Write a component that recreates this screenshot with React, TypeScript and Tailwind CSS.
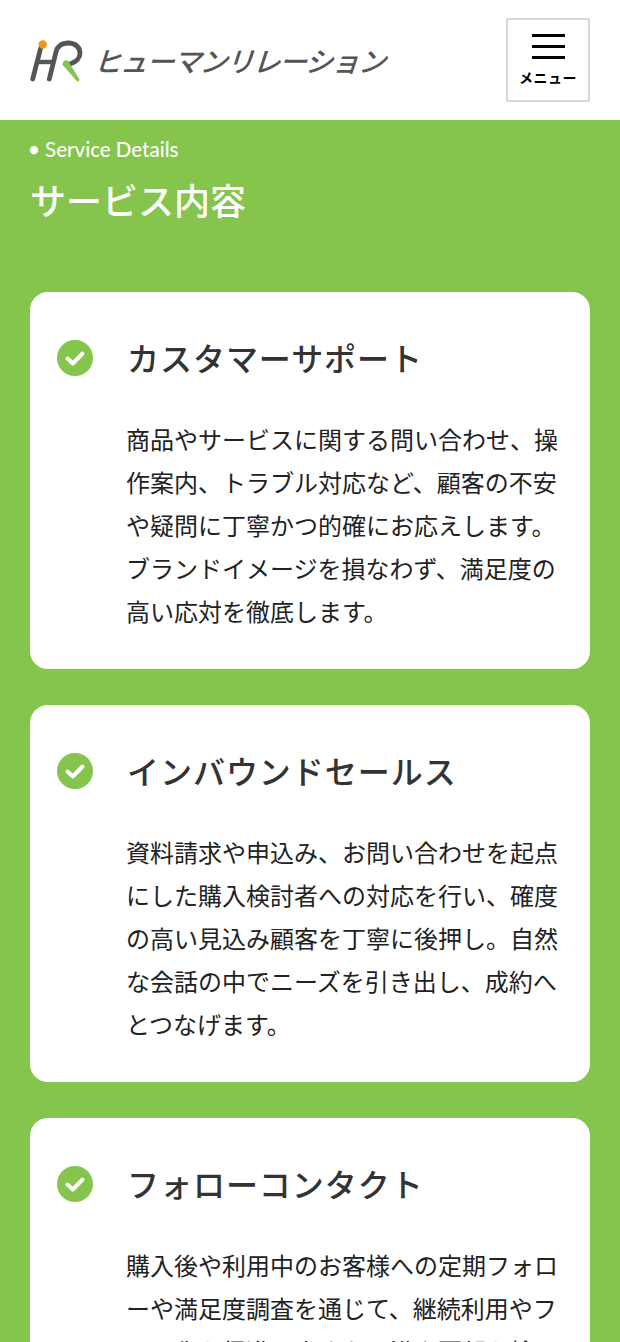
const cards = [
  {
    title: "カスタマーサポート",
    body: "商品やサービスに関する問い合わせ、操作案内、トラブル対応など、顧客の不安や疑問に丁寧かつ的確にお応えします。ブランドイメージを損なわず、満足度の高い応対を徹底します。",
  },
  {
    title: "インバウンドセールス",
    body: "資料請求や申込み、お問い合わせを起点にした購入検討者への対応を行い、確度の高い見込み顧客を丁寧に後押し。自然な会話の中でニーズを引き出し、成約へとつなげます。",
  },
  {
    title: "フォローコンタクト",
    body: "購入後や利用中のお客様への定期フォローや満足度調査を通じて、継続利用やファン化を促進。小さな不満や要望を拾い上げ、長期的な関係構築を支えます。",
  },
];

const Logo = () => (
  <div className="flex items-center gap-[13px]">
    <svg width="54" height="46" viewBox="0 0 54 46" className="block">
      <path d="M10.7 11 L2.7 42" stroke="#555" strokeWidth="4.8" strokeLinecap="round" fill="none" />
      <path d="M6 25 H22" stroke="#555" strokeWidth="4.4" fill="none" />
      <path
        d="M19.3 42 L26 15 C27.5 9 31 6 38 6 C46 6 50 11 50 16 C50 21 46 25 41 26.5"
        stroke="#555"
        strokeWidth="4.8"
        strokeLinecap="round"
        fill="none"
      />
      <path d="M32.7 28 C32 24 37 21 39.3 25.7 L49.3 42.3 C50 44 47.8 45 46.7 44 Z" fill="#85c54d" />
      <circle cx="12.7" cy="7.5" r="4.2" fill="#f39214" />
    </svg>
    <span className="block -skew-x-[18deg] text-[28px] leading-none font-medium tracking-[-1.5px] whitespace-nowrap text-[#555] font-['Noto_Sans_CJK_JP',sans-serif]">
      ヒューマンリレーション
    </span>
  </div>
);

const CheckIcon = () => (
  <svg width="36" height="36" viewBox="0 0 36 36" className="mt-[2px] block shrink-0">
    <circle cx="18" cy="18" r="18" fill="#85c54d" />
    <path d="M10.5 18.5 L15.8 23.5 L25.5 13.5" stroke="#fff" strokeWidth="4" strokeLinecap="round" strokeLinejoin="round" fill="none" />
  </svg>
);

const App = () => {
  return (
    <div className="h-[1342px] overflow-hidden bg-white font-['Noto_Sans_CJK_JP',sans-serif]">
      <header className="flex h-[120px] items-center justify-between px-[30px]">
        <Logo />
        <button className="flex h-[84px] w-[84px] flex-col items-center border-2 border-[#d8d8d8] bg-white">
          <span className="mt-[14px] flex w-[33px] flex-col gap-[8px]">
            <span className="h-[3px] bg-black" />
            <span className="h-[3px] bg-black" />
            <span className="h-[3px] bg-black" />
          </span>
          <span className="mt-[8px] text-[14px] leading-[20px] font-bold tracking-[0.5px] text-black">メニュー</span>
        </button>
      </header>
      <main className="bg-[#85c54d] px-[30px] pb-[36px]">
        <p className="-ml-[2px] pt-[15px] text-[20.5px] leading-[28px] font-medium text-white font-['Lato','Noto_Sans_CJK_JP',sans-serif]">• Service Details</p>
        <h2 className="mt-[11px] text-[36px] leading-[50px] font-medium text-white">サービス内容</h2>
        <div className="mt-[68px] flex flex-col gap-[36px]">
          {cards.map((card) => (
            <section key={card.title} className="rounded-[18px] bg-white pt-[39px] pr-[30px] pb-[37px] pl-[27px]">
              <div className="flex h-[52px] items-center gap-[34px]">
                <CheckIcon />
                <h3 className="text-[32px] leading-[52px] font-medium tracking-[0.96px] whitespace-nowrap text-[#333]">{card.title}</h3>
              </div>
              <p className="mt-[34px] ml-[69px] text-[24px] leading-[43px] text-[#222]">{card.body}</p>
            </section>
          ))}
        </div>
      </main>
    </div>
  );
};

export default App;
